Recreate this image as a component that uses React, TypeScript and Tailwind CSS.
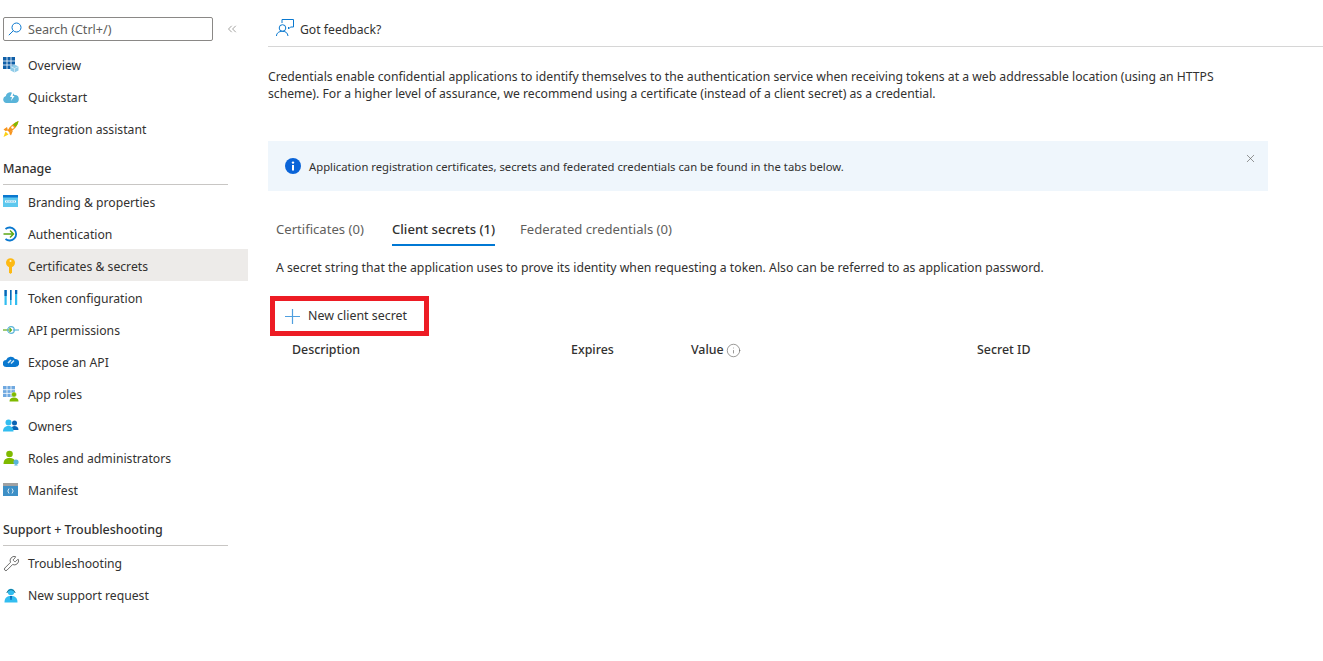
import React from 'react';
import { ChevronsLeft, X, Info, Wrench } from 'lucide-react';

const SearchGlyph = () => (
  <svg width="14" height="14" viewBox="0 0 14 14" fill="none" stroke="#0a78cf" strokeWidth="1">
    <circle cx="8.500" cy="5.500" r="4.500" />
    <path d="M5.300 8.700L0.800 13.200" />
  </svg>
);
const OverviewIcon = () => (
  <svg width="16" height="16" viewBox="0 0 16 16">
    <path d="M0 0h12v12H0z" fill="#0f5fa8" />
    <path d="M4 0v12M8 0v12M0 4h12M0 8h12" stroke="#fff" strokeWidth="0.800" />
    <path d="M11.500 7.500l4 2v4l-4 2-4-2v-4z" fill="#8fcbe8" />
    <path d="M11.500 11.500l4-2M11.500 11.500l-4-2M11.500 11.500v4" stroke="#fff" strokeWidth="0.500" />
  </svg>
);
const QuickstartIcon = () => (
  <svg width="16" height="16" viewBox="0 0 16 16">
    <path d="M3.500 14a3.500 3.500 0 0 1-.6-6.900A4.500 4.500 0 0 1 11.500 6a3.900 3.900 0 0 1 .6 8z" fill="#59b4d9" />
    <path d="M9.500 2.500L7 8h2L8 12l3.500-5H9.600L11 2.500z" fill="#fff" />
  </svg>
);
const RocketIcon = () => (
  <svg width="16" height="16" viewBox="0 0 16 16">
    <path d="M5 9.500L4 6 0.500 8.500l2 1.500z" fill="#f7941d" />
    <path d="M6.500 11l3.500-1.500-2 5-1.500-1.500z" fill="#f7941d" />
    <path d="M0.500 16l2-5.500 3 3z" fill="#fcd116" />
    <path d="M4.500 9.500C7 5 11 1.500 15.500 0 14.800 5 11 9 6.500 11.500z" fill="#f7941d" />
    <path d="M10 3.500C11.500 2 13.500 0.700 15.500 0 15.100 2.500 14 4.500 12.500 6z" fill="#7fba00" />
    <circle cx="9.500" cy="6.500" r="1.200" fill="#fff" />
  </svg>
);
const BrandingIcon = () => (
  <svg width="16" height="16" viewBox="0 0 16 16">
    <rect x="0" y="1" width="15" height="12" fill="#5ec8ee" />
    <rect x="0" y="1" width="15" height="2.500" fill="#0a78cf" />
    <rect x="2" y="6.500" width="11" height="2" fill="#fff" />
    <path d="M3 7.500h9" stroke="#3aa0d8" strokeWidth="0.600" strokeDasharray="1 0.600" />
  </svg>
);
const AuthIcon = () => (
  <svg width="16" height="16" viewBox="0 0 16 16" fill="none">
    <path d="M2.500 3A6.500 6.500 0 1 1 2.500 13" stroke="#0a78cf" strokeWidth="1.800" />
    <path d="M0.500 8h10M7 4.500L10.500 8 7 11.500" stroke="#5ea816" strokeWidth="1.500" />
  </svg>
);
const KeyIcon = () => (
  <svg width="16" height="16" viewBox="0 0 16 16">
    <circle cx="7.500" cy="4.700" r="4.500" fill="#fdb913" />
    <path d="M6 8h3v6.500l-1.500 1.500-1.500-1.500z" fill="#fdb913" />
    <circle cx="7.500" cy="3" r="1" fill="#fff2c8" />
  </svg>
);
const TokenIcon = () => (
  <svg width="16" height="16" viewBox="0 0 16 16">
    <rect x="1.500" y="0" width="2.200" height="15" fill="#32bdf0" />
    <rect x="7" y="0" width="1.500" height="15" fill="#32bdf0" />
    <rect x="12" y="0" width="2.200" height="15" fill="#32bdf0" />
    <rect x="1.500" y="0" width="2.200" height="6" fill="#0a64b4" />
    <rect x="7" y="0" width="1.500" height="10" fill="#0a64b4" />
    <rect x="12" y="0" width="2.200" height="4" fill="#0a64b4" />
  </svg>
);
const ApiPermIcon = () => (
  <svg width="16" height="16" viewBox="0 0 16 16" fill="none">
    <path d="M0 8h8" stroke="#5ea816" strokeWidth="1.200" />
    <path d="M10 8h6" stroke="#59b4d9" strokeWidth="1.200" />
    <circle cx="8" cy="8" r="3.300" stroke="#59b4d9" strokeWidth="1.200" />
    <path d="M6.500 6l2 2-2 2" stroke="#5ea816" strokeWidth="1.100" />
  </svg>
);
const ExposeIcon = () => (
  <svg width="16" height="16" viewBox="0 0 16 16">
    <path d="M3.500 13a3.500 3.500 0 0 1-.4-7A5 5 0 0 1 12 5a4 4 0 0 1 .3 8z" fill="#0a78cf" />
    <path d="M5 9l3-3M8 9.500l3-3" stroke="#cfe8f8" strokeWidth="1.500" />
  </svg>
);
const AppRolesIcon = () => (
  <svg width="16" height="16" viewBox="0 0 16 16">
    <path d="M0 0h12v11H0z" fill="#6fa8e0" />
    <path d="M4 0v11M8 0v11M0 3.700h12M0 7.400h12" stroke="#fff" strokeWidth="0.800" />
    <circle cx="11" cy="8.500" r="2.500" fill="#7fba00" stroke="#fff" strokeWidth="0.400" />
    <path d="M6.500 15.500c0-3 2-4 4.500-4s4.500 1 4.500 4z" fill="#7fba00" />
  </svg>
);
const OwnersIcon = () => (
  <svg width="16" height="16" viewBox="0 0 16 16">
    <circle cx="11.500" cy="5" r="2.500" fill="#0a64b4" />
    <path d="M8 12c0-3 1.500-4 3.500-4s4 1 4 4z" fill="#0a64b4" />
    <circle cx="5.500" cy="4.500" r="3" fill="#32bdf0" />
    <path d="M0 13.500c0-4 2.500-5.500 5.500-5.500s5 1.500 5 5.500z" fill="#32bdf0" />
  </svg>
);
const RolesIcon = () => (
  <svg width="16" height="16" viewBox="0 0 16 16">
    <circle cx="6.500" cy="4" r="3.300" fill="#7fba00" />
    <path d="M0.500 14c0-4.500 2.500-6 6-6s6 1.500 6 6z" fill="#7fba00" />
    <circle cx="13" cy="12" r="2.600" fill="#59b4d9" />
    <path d="M11 15.500h4l-2-1.500z" fill="#59b4d9" />
  </svg>
);
const ManifestIcon = () => (
  <svg width="16" height="16" viewBox="0 0 16 16">
    <rect x="0" y="1" width="15" height="13" fill="#3d8fc6" />
    <rect x="0" y="1" width="15" height="3" fill="#a0a1a2" />
    <path d="M6 6.500L4.800 9 6 11.500M9 6.500L10.200 9 9 11.500" stroke="#fff" strokeWidth="0.800" fill="none" />
  </svg>
);
const SupportIcon = () => (
  <svg width="16" height="16" viewBox="0 0 16 16">
    <circle cx="8" cy="5" r="3.200" fill="#32bdf0" />
    <path d="M3.800 6A4.300 4.300 0 0 1 12.200 6" stroke="#0f6e8c" strokeWidth="1" fill="none" />
    <path d="M1.500 15.500c0-5 2.500-6.500 6.500-6.500s6.500 1.500 6.500 6.500z" fill="#32bdf0" />
    <path d="M7 9h2l-.5 4h-1z" fill="#0a64b4" />
  </svg>
);
const FeedbackIcon = () => (
  <svg width="18" height="18" viewBox="0 0 18 18" fill="none" stroke="#0a78cf" strokeWidth="1">
    <path d="M6 4V0.500h11.500V8H14.500L12.500 10V8" />
    <circle cx="6.500" cy="9" r="3.300" />
    <path d="M0.500 17c0-3 2.500-4.700 6-4.700s5 1.700 5.500 4.700" />
  </svg>
);
const PlusGlyph = () => (
  <svg width="15" height="15" viewBox="0 0 15 15" stroke="#4f9fdf" strokeWidth="1.200">
    <path d="M7.500 0v15M0 7.500h15" />
  </svg>
);
const InfoFilled = () => (
  <svg width="16" height="16" viewBox="0 0 16 16">
    <circle cx="8" cy="8" r="8" fill="#0a64d8" />
    <rect x="7" y="7" width="2" height="5.500" fill="#fff" />
    <circle cx="8" cy="4.600" r="1.200" fill="#fff" />
  </svg>
);

const navTop = [
  { label: 'Overview', icon: <OverviewIcon /> },
  { label: 'Quickstart', icon: <QuickstartIcon /> },
  { label: 'Integration assistant', icon: <RocketIcon /> },
];

const navManage = [
  { label: 'Branding & properties', icon: <BrandingIcon /> },
  { label: 'Authentication', icon: <AuthIcon /> },
  { label: 'Certificates & secrets', icon: <KeyIcon />, active: true },
  { label: 'Token configuration', icon: <TokenIcon /> },
  { label: 'API permissions', icon: <ApiPermIcon /> },
  { label: 'Expose an API', icon: <ExposeIcon /> },
  { label: 'App roles', icon: <AppRolesIcon /> },
  { label: 'Owners', icon: <OwnersIcon /> },
  { label: 'Roles and administrators', icon: <RolesIcon /> },
  { label: 'Manifest', icon: <ManifestIcon /> },
];

const navSupport = [
  { label: 'Troubleshooting', icon: <Wrench size={17} strokeWidth={1} color="#323130" /> },
  { label: 'New support request', icon: <SupportIcon /> },
];

type NavItem = { label: string; icon: React.ReactNode; active?: boolean };

const NavRow = ({ item, low = false }: { item: NavItem; low?: boolean }) => (
  <div className={`flex h-8 items-center pl-[3px] ${item.active ? 'bg-[#edebe9]' : ''}`}>
    <span className={`flex h-4 w-[25px] shrink-0 items-center ${low ? 'mt-[1px]' : ''}`}>{item.icon}</span>
    <span className={`${low ? 'pt-[4px]' : 'pt-[2px]'} text-[12.200px] leading-none text-[#323130]`}>{item.label}</span>
  </div>
);

const SectionHeading = ({ title }: { title: string }) => (
  <div className="ml-[3px] mr-[20px] border-b border-[#c8c6c4] pb-[6px] text-[12.500px] leading-[18px] font-medium text-[#323130]">
    {title}
  </div>
);

export default function App() {
  return (
    <div className="flex h-[661px] w-[1323px] overflow-hidden bg-white font-['Noto_Sans',sans-serif] text-[#323130]">
      <aside className="w-[248px] shrink-0 pt-[17px]">
        <div className="flex items-center">
          <div className="ml-[3px] flex h-6 w-[210px] items-center rounded-[2px] border border-[#8a8886] pl-[4px]">
            <SearchGlyph />
            <span className="ml-[6px] pt-[2px] text-[12.600px] leading-none text-[#605e5c]">Search (Ctrl+/)</span>
          </div>
          <ChevronsLeft size={14} strokeWidth={1} color="#605e5c" className="ml-[12px]" />
        </div>
        <div className="mt-2">
          {navTop.map((item) => (
            <NavRow key={item.label} item={item} />
          ))}
        </div>
        <div className="mt-[15px]">
          <SectionHeading title="Manage" />
        </div>
        <div>
          {navManage.map((item) => (
            <NavRow key={item.label} item={item} low />
          ))}
        </div>
        <div className="mt-[16px]">
          <SectionHeading title="Support + Troubleshooting" />
        </div>
        <div className="mt-[1px]">
          {navSupport.map((item) => (
            <NavRow key={item.label} item={item} />
          ))}
        </div>
      </aside>

      <main className="min-w-0 flex-1 pl-5">
        <div className="flex h-[47px] items-center border-b border-[#d6d6d6] pl-2 pt-[10px]">
          <FeedbackIcon />
          <span className="ml-[6px] pt-[4px] text-[12.200px] leading-none">Got feedback?</span>
        </div>

        <p className="mt-[21px] w-[960px] text-[12.190px] leading-[17px]">
          Credentials enable confidential applications to identify themselves to the authentication service when
          receiving tokens at a web addressable location (using an HTTPS scheme). For a higher level of assurance, we
          recommend using a certificate (instead of a client secret) as a credential.
        </p>

        <div className="relative mt-[39px] flex h-[50px] w-[1000px] items-center bg-[#eff6fc] pl-[17px]">
          <InfoFilled />
          <span className="ml-2 pt-[2px] text-[11.270px] leading-none">
            Application registration certificates, secrets and federated credentials can be found in the tabs below.
          </span>
          <X size={13} strokeWidth={1.200} color="#605e5c" className="absolute right-[11px] top-[11px]" />
        </div>

        <div className="mt-[27px] ml-2 flex text-[13.100px] leading-none">
          <div className="h-[28px] w-[116px] pt-[5px] text-[#605e5c]">Certificates (0)</div>
          <div className="h-[28px] border-b-2 border-[#0078d4] pt-[5px] font-medium">Client secrets (1)</div>
          <div className="ml-[25px] h-[28px] pt-[5px] text-[#605e5c]">Federated credentials (0)</div>
        </div>

        <p className="mt-[13px] ml-2 text-[12.220px] leading-[18px]">
          A secret string that the application uses to prove its identity when requesting a token. Also can be referred
          to as application password.
        </p>

        <div className="mt-[19px] ml-[2px] flex h-10 w-[159px] items-center border-[5px] border-[#ed1c24] pl-[10px]">
          <PlusGlyph />
          <span className="ml-2 text-[12.400px] leading-none">New client secret</span>
        </div>

        <div className="mt-[4px] ml-6 flex h-[20px] items-center text-[12.400px] leading-none font-medium">
          <div className="w-[279px]">Description</div>
          <div className="w-[120px]">Expires</div>
          <div className="flex w-[286px] items-center gap-[2px]">
            Value <Info size={15} strokeWidth={1} color="#605e5c" />
          </div>
          <div>Secret ID</div>
        </div>
      </main>
    </div>
  );
}
